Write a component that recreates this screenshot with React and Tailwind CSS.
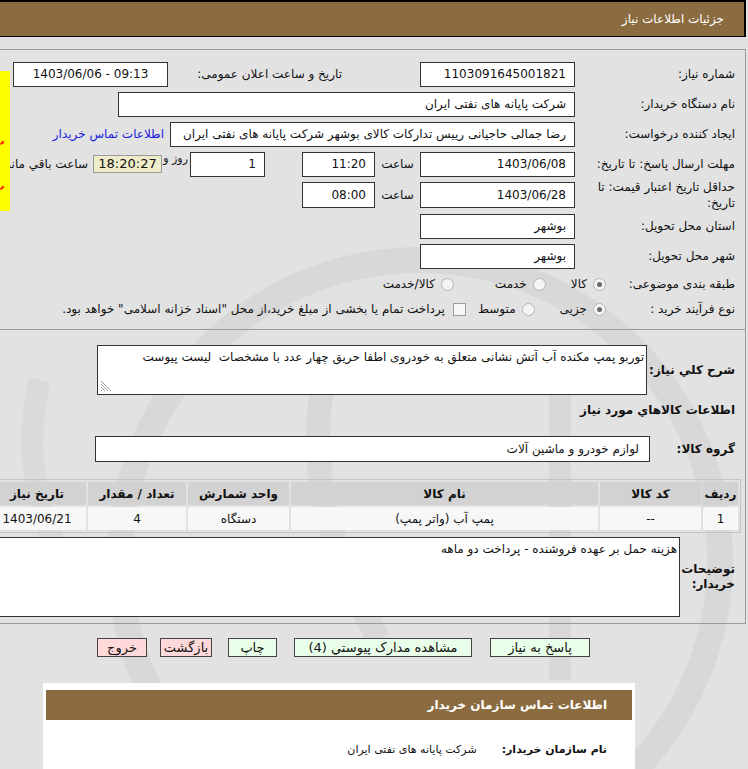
import React from "react";

function Field({ w, h = "h-[25px]", children, className = "" }) {
  return (
    <div className={`shrink-0 ${w} ${h} bg-white border border-[#333] flex items-center px-[8px] whitespace-nowrap ${className}`}>
      {children}
    </div>
  );
}

function Label({ children, className = "" }) {
  return <div className={`shrink-0 w-[170px] pr-[10px] leading-[16px] ${className}`}>{children}</div>;
}

function Radio({ on }) {
  return (
    <span className="w-[13px] h-[13px] rounded-full border border-[#b5b5b5] bg-[#f4f4f4] flex items-center justify-center shrink-0">
      {on && <span className="w-[5px] h-[5px] rounded-full bg-[#6a6a6a]" />}
    </span>
  );
}

function Btn({ children, w, pink }) {
  return (
    <div className={`shrink-0 ${w} h-[19px] border border-[#444] flex items-center justify-center text-[13px] ${pink ? "bg-[#ffd9d9]" : "bg-[#eaffea]"}`}>
      {children}
    </div>
  );
}

export default function App() {
  const font = "font-['DejaVu_Sans',sans-serif]";
  return (
    <div dir="rtl" className={`relative w-[748px] h-[769px] overflow-hidden bg-[#e2e2e2] text-[12px] text-[#111] ${font}`}>
      {/* watermark */}
      <svg className="absolute left-0 top-0 pointer-events-none" width="748" height="769">
        <circle cx="420" cy="560" r="300" fill="none" stroke="#d8d8d8" strokeWidth="26" />
        <path d="M330 360 C 300 450, 330 560, 380 640" fill="none" stroke="#d8d8d8" strokeWidth="24" />
        <path d="M560 380 L 560 680" fill="none" stroke="#d8d8d8" strokeWidth="22" />
        <path d="M40 380 C 20 460, 40 540, 90 600" fill="none" stroke="#dadada" strokeWidth="22" />
      </svg>

      {/* header */}
      <div className="relative h-[37px] bg-[#8b6c40] border-t-2 border-b border-r-2 border-black flex items-center pr-[20px] text-white text-[12px] mr-[2px]">
        جزئیات اطلاعات نیاز
      </div>

      {/* first box */}
      <div className="relative mt-[12px] mr-[2px] border-t border-r border-b border-[#9a9a9a] pt-[9px] pb-[8px]">
        <div className="flex items-center h-[30px]">
          <Label>شماره نیاز:</Label>
          <Field w="w-[155px]">1103091645001821</Field>
          <div className="shrink-0 mr-[78px] w-[174px]">تاریخ و ساعت اعلان عمومی:</div>
          <Field w="w-[155px]" className="justify-center"><span dir="ltr">1403/06/06 - 09:13</span></Field>
        </div>
        <div className="flex items-center h-[30px]">
          <Label>نام دستگاه خریدار:</Label>
          <Field w="w-[457px]">شرکت پایانه های نفتی ایران</Field>
        </div>
        <div className="flex items-center h-[30px]">
          <Label>ایجاد کننده درخواست:</Label>
          <Field w="w-[405px]">رضا جمالی حاجیانی رییس تدارکات کالای بوشهر شرکت پایانه های نفتی ایران</Field>
          <div className="shrink-0 mr-[6px] text-[#1a1ae0] whitespace-nowrap">اطلاعات تماس خریدار</div>
        </div>
        <div className="flex items-center h-[30px]">
          <Label>مهلت ارسال پاسخ: تا تاریخ:</Label>
          <Field w="w-[155px]">1403/06/08</Field>
          <div className="shrink-0 w-[45px] text-center">ساعت</div>
          <Field w="w-[73px]">11:20</Field>
          <div className="shrink-0 w-[37px]" />
          <Field w="w-[75px]">1</Field>
          <div className="shrink-0 w-[28px] self-start mt-[2px] text-[11px] pr-[2px] whitespace-nowrap">روز و</div>
          <div className="shrink-0 w-[69px] h-[18px] bg-[#efecc9] border border-[#9a9a9a] flex items-center justify-center text-[13px]">18:20:27</div>
          <div className="shrink-0 mr-[5px] whitespace-nowrap">ساعت باقي مانده</div>
        </div>
        <div className="flex items-center h-[32px]">
          <Label>حداقل تاریخ اعتبار قیمت: تا تاریخ:</Label>
          <Field w="w-[155px]" h="h-[26px]">1403/06/28</Field>
          <div className="shrink-0 w-[45px] text-center">ساعت</div>
          <Field w="w-[73px]" h="h-[26px]">08:00</Field>
        </div>
        <div className="flex items-center h-[30px]">
          <Label>استان محل تحویل:</Label>
          <Field w="w-[155px]">بوشهر</Field>
        </div>
        <div className="flex items-center h-[30px]">
          <Label>شهر محل تحویل:</Label>
          <Field w="w-[155px]">بوشهر</Field>
        </div>
        <div className="flex items-center h-[26px]">
          <div className="shrink-0 w-[139px] pr-[10px]">طبقه بندی موضوعی:</div>
          <div className="flex items-center gap-[6px]"><Radio on /><span>کالا</span></div>
          <div className="flex items-center gap-[6px] mr-[25px]"><Radio /><span>خدمت</span></div>
          <div className="flex items-center gap-[6px] mr-[41px]"><Radio /><span>کالا/خدمت</span></div>
        </div>
        <div className="flex items-center h-[24px]">
          <div className="shrink-0 w-[139px] pr-[10px]">نوع فرآیند خرید :</div>
          <div className="flex items-center gap-[6px]"><Radio on /><span>جزیی</span></div>
          <div className="flex items-center gap-[6px] mr-[25px]"><Radio /><span>متوسط</span></div>
          <div className="flex items-center gap-[8px] mr-[12px] whitespace-nowrap">
            <span className="w-[13px] h-[13px] border border-[#9a9a9a] bg-[#f6f6f6] shrink-0" />
            <span>پرداخت تمام یا بخشی از مبلغ خرید،از محل "اسناد خزانه اسلامی" خواهد بود.</span>
          </div>
        </div>

        {/* yellow side strip (clipped side panel) */}
        <div className="absolute left-[-110px] top-[21px] w-[120px] h-[140px] bg-[#ffff00] text-[#ff3300] font-bold text-[13px]">
          <div className="absolute left-[102px] top-[60px]">ت</div>
          <div className="absolute left-[102px] top-[105px]">ت</div>
        </div>
      </div>

      {/* second box */}
      <div className="relative mr-[2px] border-r border-b border-[#9a9a9a] pt-[15px] pb-[6px]">
        <div className="flex items-center">
          <div className="shrink-0 w-[98px] pr-[10px] font-bold">شرح کلي نیاز:</div>
          <div className="relative shrink-0 w-[550px] h-[50px] bg-white border border-[#333] px-[2px] pt-[2px] whitespace-pre">
            {"توربو پمپ مکنده آب آتش نشانی متعلق به خودروی اطفا حریق چهار عدد با مشخصات  لیست پیوست"}
            <svg className="absolute left-[2px] bottom-[2px]" width="11" height="11">
              <path d="M1 3 L8 10 M1 6 L5 10 M1 9 L2 10 M1 0 L11 10" stroke="#999" strokeWidth="1" />
            </svg>
          </div>
        </div>
        <div className="pr-[10px] font-bold mt-[5px] h-[20px] flex items-center">اطلاعات کالاهاي مورد نیاز</div>
        <div className="flex items-center mt-[16px]">
          <div className="shrink-0 w-[95px] pr-[10px] font-bold">گروه کالا:</div>
          <Field w="w-[555px]" h="h-[26px]">
            <span className="pr-[2px]">لوازم خودرو و ماشین آلات</span>
          </Field>
        </div>

        {/* table */}
        <div className="mt-[17px] mr-[4px] flex">
          <table className="shrink-0 border-separate border-spacing-[2px] border border-[#c4c4c4] text-[12px]">
            <thead>
              <tr className="h-[23px] bg-[#d2d2d2] font-bold">
                <th className="w-[35px] font-bold">ردیف</th>
                <th className="w-[101px] font-bold">کد کالا</th>
                <th className="w-[307px] font-bold">نام کالا</th>
                <th className="w-[101px] font-bold">واحد شمارش</th>
                <th className="w-[98px] font-bold">تعداد / مقدار</th>
                <th className="w-[98px] font-bold">تاریخ نیاز</th>
              </tr>
            </thead>
            <tbody>
              <tr className="h-[23px] bg-[#f7f7f7] text-center">
                <td>1</td>
                <td>--</td>
                <td>پمپ آب (واتر پمپ)</td>
                <td>دستگاه</td>
                <td>4</td>
                <td>1403/06/21</td>
              </tr>
            </tbody>
          </table>
        </div>

        <div className="flex items-center mt-[4px]">
          <div className="shrink-0 w-[65px] pr-[10px] font-bold leading-[15px]">توضیحات خریدار:</div>
          <div className="shrink-0 w-[720px] h-[80px] bg-white border border-[#333] px-[2px] pt-[2px] whitespace-nowrap">
            هزینه حمل بر عهده فروشنده - پرداخت دو ماهه
          </div>
        </div>
      </div>

      {/* buttons */}
      <div className="relative flex items-center mt-[14px] pr-[158px]">
        <Btn w="w-[100px]">پاسخ به نیاز</Btn>
        <div className="w-[18px] shrink-0" />
        <Btn w="w-[178px]">مشاهده مدارک پیوستي (4)</Btn>
        <div className="w-[17px] shrink-0" />
        <Btn w="w-[49px]">چاپ</Btn>
        <div className="w-[16px] shrink-0" />
        <Btn w="w-[52px]" pink>بازگشت</Btn>
        <div className="w-[13px] shrink-0" />
        <Btn w="w-[50px]" pink>خروج</Btn>
      </div>

      {/* contact panel */}
      <div className="relative mt-[26px] mr-[113px] w-[592px] h-[100px] bg-white pt-[7px] px-[3px]">
        <div className="h-[30px] bg-[#8b6c40] text-white font-bold text-[12px] flex items-center pr-[25px]">
          اطلاعات تماس سازمان خریدار
        </div>
        <div className="flex items-center mt-[22px] pr-[25px]">
          <span className="font-bold text-[11px]">نام سازمان خریدار:</span>
          <span className="mr-[25px] text-[11px]">شرکت پایانه های نفتی ایران</span>
        </div>
      </div>
    </div>
  );
}
